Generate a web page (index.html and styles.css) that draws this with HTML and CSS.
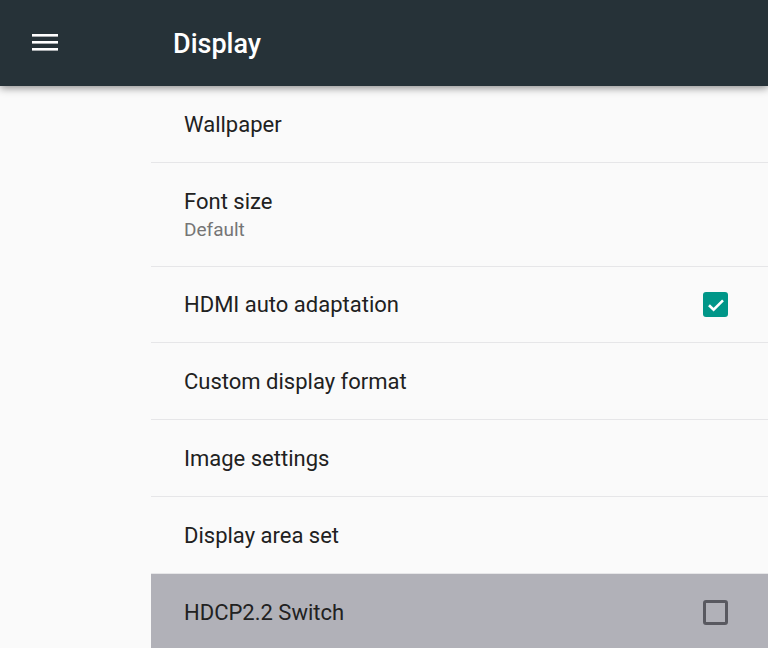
FILE: index.html
```html
<!DOCTYPE html>
<html lang="en">
<head>
  <meta charset="UTF-8">
  <title>Display</title>
  <link rel="stylesheet" href="styles.css">
</head>
<body>

  <header class="toolbar">
    <button class="menu-btn" aria-label="Menu">
      <svg width="26" height="18" viewBox="0 0 26 18">
        <rect x="0" y="0" width="26" height="2.6" fill="#fff"/>
        <rect x="0" y="7" width="26" height="2.6" fill="#fff"/>
        <rect x="0" y="14" width="26" height="2.6" fill="#fff"/>
      </svg>
    </button>
    <h1 class="title">Display</h1>
  </header>

  <ul class="prefs">
    <li class="pref">
      <div class="pref-text"><div class="pref-title">Wallpaper</div></div>
    </li>
    <li class="pref tall">
      <div class="pref-text">
        <div class="pref-title">Font size</div>
        <div class="pref-summary">Default</div>
      </div>
    </li>
    <li class="pref short">
      <div class="pref-text"><div class="pref-title">HDMI auto adaptation</div></div>
      <span class="check on">
        <svg width="18" height="14" viewBox="0 0 18 14">
          <path d="M2 7.2 L6.6 11.6 L16 2.4" fill="none" stroke="#fff" stroke-width="2.6"/>
        </svg>
      </span>
    </li>
    <li class="pref">
      <div class="pref-text"><div class="pref-title">Custom display format</div></div>
    </li>
    <li class="pref">
      <div class="pref-text"><div class="pref-title">Image settings</div></div>
    </li>
    <li class="pref">
      <div class="pref-text"><div class="pref-title">Display area set</div></div>
    </li>
    <li class="pref focused">
      <div class="pref-text"><div class="pref-title">HDCP2.2 Switch</div></div>
      <span class="check off"></span>
    </li>
  </ul>

</body>
</html>
```

FILE: styles.css
```css
body {
  margin: 0;
  background: #fafafa;
  font-family: Roboto, "Noto Sans", sans-serif;
  overflow: hidden;
}
.toolbar {
  height: 86px;
  background: #263238;
  display: flex;
  align-items: center;
  box-shadow: 0 2px 8px rgba(0,0,0,0.45);
  position: relative;
  z-index: 1;
}
.menu-btn {
  background: none;
  border: none;
  padding: 0;
  margin-left: 32px;
  width: 26px;
  height: 18px;
  display: flex;
}
.title {
  margin: 2px 0 0 115px;
  color: #fff;
  font-size: 27px;
  font-weight: 500;
}
.prefs {
  list-style: none;
  margin: 0 0 0 151px;
  padding: 0;
}
.pref {
  height: 76px;
  border-bottom: 1px solid #e6e6e8;
  display: flex;
  align-items: center;
  padding: 0 40px 0 33px;
}
.pref.tall {
  height: 103px;
}
.pref.short {
  height: 75px;
}
.pref-text {
  flex: 1;
}
.pref-title {
  font-size: 22px;
  color: #212121;
}
.pref-summary {
  font-size: 19px;
  color: #757575;
  margin-top: 4px;
}
.focused {
  background: #b1b1b8;
  border-bottom: none;
}
.check {
  width: 25px;
  height: 25px;
  border-radius: 3px;
  box-sizing: border-box;
  display: flex;
  align-items: center;
  justify-content: center;
}
.check.on {
  background: #009688;
}
.check.off {
  border: 3px solid #595960;
}
```
